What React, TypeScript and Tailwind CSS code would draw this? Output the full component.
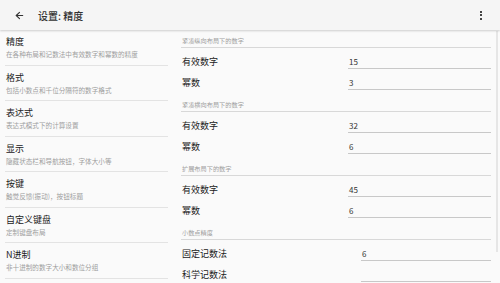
import React from 'react';
import { ArrowLeft } from 'lucide-react';

const font = { fontFamily: '"Noto Sans CJK SC", "Noto Sans", sans-serif' };

const categories = [
  { title: '精度', sub: '在各种布局和记数法中有效数字和幂数的精度' },
  { title: '格式', sub: '包括小数点和千位分隔符的数字格式' },
  { title: '表达式', sub: '表达式模式下的计算设置' },
  { title: '显示', sub: '隐藏状态栏和导航按钮，字体大小等' },
  { title: '按键', sub: '触觉反馈(振动)，按钮标题' },
  { title: '自定义键盘', sub: '定制键盘布局' },
  { title: 'N进制', sub: '非十进制的数字大小和数位分组' },
];

const sections = [
  { header: '紧凑纵向布局下的数字', rows: [['有效数字', '15'], ['幂数', '3']] },
  { header: '紧凑横向布局下的数字', rows: [['有效数字', '32'], ['幂数', '6']] },
  { header: '扩展布局下的数字', rows: [['有效数字', '45'], ['幂数', '6']] },
  { header: '小数点精度', rows: [['固定记数法', '6'], ['科学记数法', '']], wide: true },
];

export default function App() {
  return (
    <div className="relative w-[500px] h-[283px] overflow-hidden bg-[#fafafa] text-[#212121]" style={font}>
      {/* Toolbar */}
      <div className="relative z-10 h-[30px] bg-[#f5f5f5] flex items-center shadow-[0_1px_2px_rgba(0,0,0,0.18)]">
        <ArrowLeft className="ml-[14px] w-[11px] h-[11px] text-[#333]" strokeWidth={2.4} />
        <span className="ml-[13px] text-[10px] font-medium text-[#333]">设置: 精度</span>
        <div className="ml-auto mr-[18px] flex flex-col gap-[1.5px]">
          <span className="w-[2px] h-[2px] bg-[#444]" />
          <span className="w-[2px] h-[2px] bg-[#444]" />
          <span className="w-[2px] h-[2px] bg-[#444]" />
        </div>
      </div>

      <div className="flex">
        {/* Categories */}
        <div className="w-[175px] pl-[5px] pr-[7px]">
          {categories.map((c) => (
            <div key={c.title} className="h-[35.5px] border-b-[1.5px] border-[#e3e3e3] pl-[1px] pt-[5px]">
              <div className="text-[9px] leading-[14px]">{c.title}</div>
              <div className="text-[6.6px] leading-[10px] text-[#9e9e9e]">{c.sub}</div>
            </div>
          ))}
        </div>

        {/* Details */}
        <div className="flex-1 pl-[6px] pr-[9px]">
          {sections.map((s) => (
            <div key={s.header} className="h-[64px]">
              <div className="h-[18px] pt-[6px] pl-[1px] border-b-[1.5px] border-[#d8d8d8] text-[6.2px] leading-[10px] text-[#9e9e9e]">
                {s.header}
              </div>
              <div className="mt-[3px]">
                {s.rows.map(([label, value]) => (
                  <div key={label} className="h-[21px] flex items-center">
                    <div className={`${s.wide ? 'w-[180px]' : 'w-[167px]'} pl-[1px] text-[9px]`}>{label}</div>
                    <div className="flex-1 h-[13px] mt-[1px] border-b-[1.5px] border-[#c8c8c8] text-[8px] leading-[11px] text-[#333] pl-[1px]">
                      {value}
                    </div>
                  </div>
                ))}
              </div>
            </div>
          ))}
        </div>
      </div>

      {/* Scrollbar */}
      <div className="absolute right-[2px] top-[31px] w-[2px] h-[221px] bg-[#e6e6e6]" />
    </div>
  );
}
